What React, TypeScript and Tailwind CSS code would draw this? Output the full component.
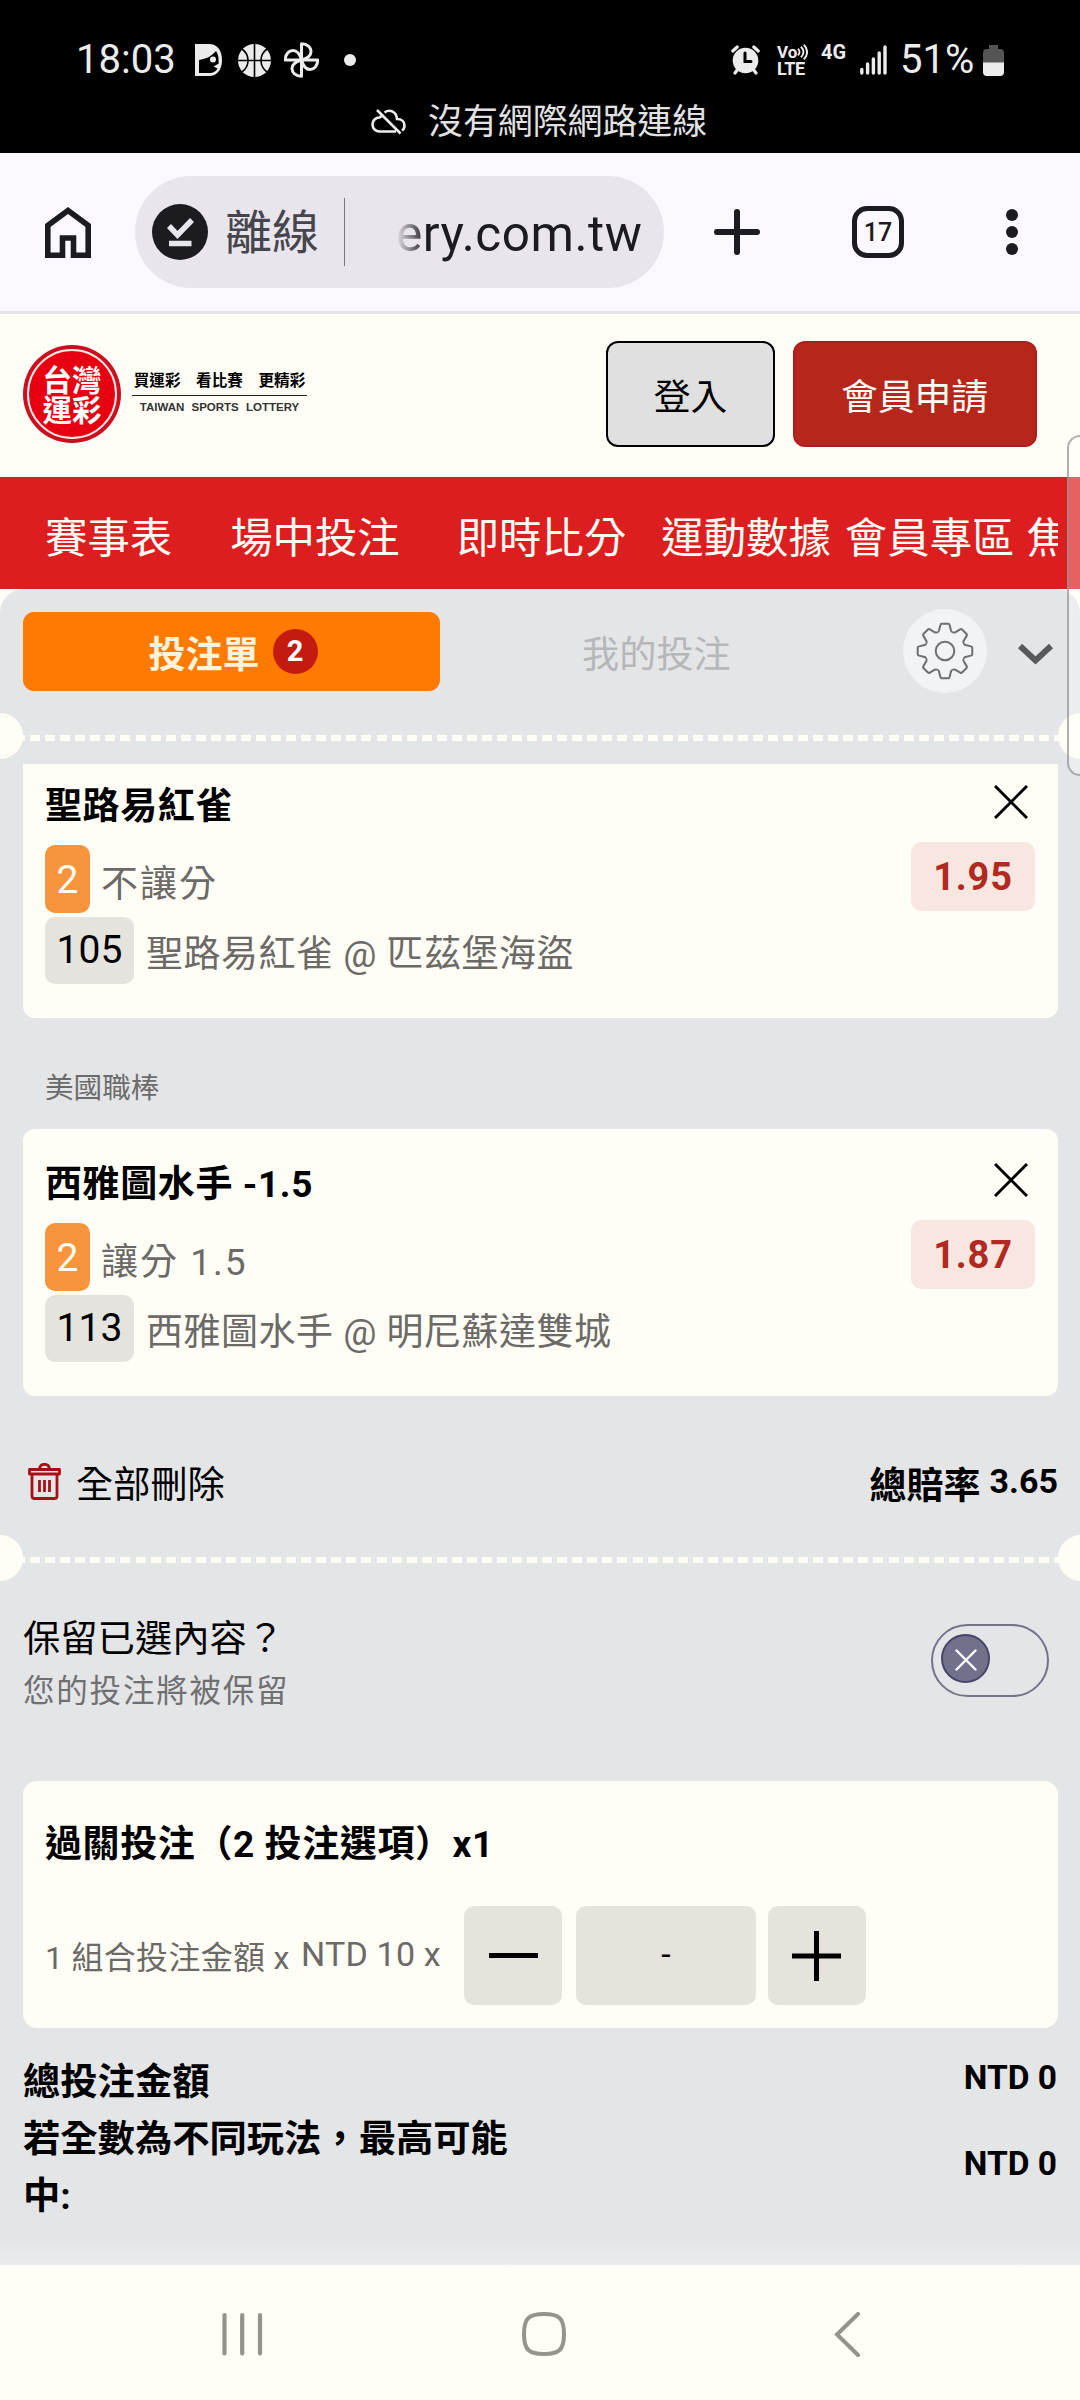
import { Fragment } from "react";

interface Bet {
  title: string;
  kind: string;
  code: string;
  match: string;
  odds: string;
}

const bets: Bet[] = [
  {
    title: "聖路易紅雀",
    kind: "不讓分",
    code: "105",
    match: "聖路易紅雀 @ 匹茲堡海盜",
    odds: "1.95",
  },
  {
    title: "西雅圖水手 -1.5",
    kind: "讓分 1.5",
    code: "113",
    match: "西雅圖水手 @ 明尼蘇達雙城",
    odds: "1.87",
  },
];

//////////

function StatusBar() {
  return (
    <div className="h-[153px] shrink-0 bg-black text-[#ececec] pt-10">
      <div className="h-10 flex items-center pl-[76px] pr-[76px]">
        <p className="w-[119px] text-[40px] leading-10">18:03</p>
        <svg width="27" height="32" viewBox="0 0 27 32" fill="currentColor">
          <path
            fillRule="evenodd"
            d="M0 0h14c8 0 13 6 13 16s-5 16-13 16H0zM4 16v13h10c5 0 7-2 8.500-4.500l-4-2L22 20.500a2 2 0 0 0 1.500-3V14c-.5-3-1-5-2.500-7C16 13 10 15 4 16z"
          />
          <circle cx="18" cy="15.500" r="3" />
        </svg>
        <svg className="ml-4" width="33" height="33" viewBox="0 0 33 33">
          <circle cx="16.500" cy="16.500" r="16.500" fill="currentColor" />
          <path
            d="M16.500 0v33M0 16.500h33M4 5c8 6 8 17 0 23M29 5c-8 6-8 17 0 23"
            fill="none"
            stroke="#000"
            strokeWidth="1.600"
          />
        </svg>
        <svg
          className="ml-[13px]"
          width="35"
          height="36"
          viewBox="-17.5 -18 35 36"
          fill="none"
          stroke="currentColor"
          strokeWidth="3"
          strokeLinejoin="round"
        >
          {[0, 90, 180, 270].map((angle) => (
            <path
              key={angle}
              d="M0 0V-16.200C6-16.200 9.500-12.500 9.500-8.500C9.500-4 5.500-1.500 0 0"
              transform={`rotate(${angle})`}
            />
          ))}
        </svg>
        <span className="ml-[25px] size-3 rounded-full bg-[#ececec]" />

        <svg
          className="ml-auto"
          width="29"
          height="30"
          viewBox="0 0 29 30"
          fill="none"
          stroke="currentColor"
          strokeLinecap="round"
        >
          <circle cx="14.500" cy="15.500" r="12.800" fill="currentColor" stroke="none" />
          <path d="M1.800 6 6.200 2M27.200 6 22.800 2M4 28l3-4M25 28l-3-4" strokeWidth="3.200" />
          <path d="M14 8v8.500h6" stroke="#000" strokeWidth="3" />
        </svg>
        <div className="ml-[17px] w-[31px] font-bold">
          <div className="flex items-center h-4 text-[17px] leading-4">
            Vo
            <svg
              width="11"
              height="16"
              viewBox="0 0 11 16"
              fill="none"
              stroke="currentColor"
              strokeWidth="2"
            >
              <path d="M1 4.500c2 2 2 5 0 7M4 2.500c3.500 3 3.500 8 0 11M7 .5c4.500 4 4.500 11 0 15" />
            </svg>
          </div>
          <p className="text-[18px] leading-[17px] tracking-[-0.5px]">LTE</p>
        </div>
        <p className="ml-[13px] w-[26px] text-[20px] leading-5 font-bold -mt-[17px]">4G</p>
        <svg
          className="ml-[13px]"
          width="27"
          height="30"
          viewBox="0 0 27 30"
          stroke="currentColor"
          strokeWidth="3.400"
          strokeLinecap="round"
        >
          <path d="M1.800 24.500v3.500M7.600 19v9M13.400 14v14M19.200 8v20M25 2v26" />
        </svg>
        <p className="ml-[13px] w-[83px] text-[40px] leading-10">51%</p>
        <svg width="21" height="31" viewBox="0 0 21 31">
          <path d="M6 0h9v4h2q4 0 4 4v10H0V8q0-4 4-4h2z" fill="#555" />
          <path d="M0 17.500h21V27q0 4-4 4H4q-4 0-4-4z" fill="currentColor" />
        </svg>
      </div>
      <div className="h-10 mt-[22px] flex items-center pl-[371px]">
        <svg
          width="35"
          height="26"
          viewBox="0 0 35 26"
          fill="none"
          stroke="currentColor"
          strokeWidth="2.600"
        >
          <path d="M6 1 29.500 24.500M25 22.500H8.500C4.500 22.500 1.500 19.500 1.500 15.500S4.500 8.500 8.500 8.500L11 6.500M13.500 3.500C19-.5 25.500 3 26 10C31 10 33.500 13 33.500 16.500C33.500 18.500 32.500 20.500 31 21.500" />
        </svg>
        <p className="ml-[22px] mt-0.5 text-[34.9px] leading-10 text-[#e2e2e2]">沒有網際網路連線</p>
      </div>
    </div>
  );
}

//////////

function BrowserBar() {
  return (
    <div className="h-[161px] shrink-0 flex items-center bg-[#fbf9ff] border-b-[3px] border-[#e3e2e8] pl-[45px] text-[#1c1b20]">
      <svg
        width="46"
        height="51"
        viewBox="0 0 46 51"
        fill="none"
        stroke="currentColor"
        strokeWidth="5.600"
      >
        <path d="M2.800 48.200V18.500L23 3.500l20.200 15v29.700H28.500V31h-11v17.200z" />
      </svg>
      <div className="ml-11 w-[529px] h-28 rounded-full bg-[#e8e6ec] flex items-center pl-[17px]">
        <svg width="56" height="56" viewBox="0 0 56 56">
          <circle cx="28" cy="28" r="28" fill="currentColor" />
          <path
            d="M17 22l8.500 9L40 16M17 39.500h22.500"
            fill="none"
            stroke="#e8e6ec"
            strokeWidth="5.500"
          />
        </svg>
        <p className="ml-[17px] mt-0.5 text-[47px] leading-[56px] text-[#46454c]">離線</p>
        <span className="ml-[25px] w-px h-[68px] bg-[#77767c]" />
        <p className="ml-[51px] mt-[3px] text-[49.500px] leading-[56px] tracking-[0.5px] [mask-image:linear-gradient(to_right,transparent,black_30px)]">
          ery.com.tw
        </p>
      </div>
      <svg
        className="ml-[50px]"
        width="46"
        height="46"
        viewBox="0 0 46 46"
        stroke="currentColor"
        strokeWidth="6"
        strokeLinecap="round"
      >
        <path d="M23 3v40M3 23h40" />
      </svg>
      <div className="ml-[92px] w-[52px] h-[52px] border-[5.500px] border-[#1c1b20] rounded-[15px] flex items-center justify-center text-[25px] leading-none font-medium">
        17
      </div>
      <div className="ml-[102px] flex flex-col gap-[5px]">
        <span className="size-3 rounded-full bg-[#1c1b20]" />
        <span className="size-3 rounded-full bg-[#1c1b20]" />
        <span className="size-3 rounded-full bg-[#1c1b20]" />
      </div>
    </div>
  );
}

//////////

function Header() {
  return (
    <div className="h-[163px] shrink-0 flex items-center pl-[23px] pb-[3px]">
      <div className="size-[98px] rounded-full bg-[#c90f20] p-1">
        <div className="size-full rounded-full border-2 border-[#ffe9e4] bg-[#e60012] text-white font-bold text-[29.500px] leading-[30px] flex flex-col items-center justify-center pt-[3px]">
          <p>台灣</p>
          <p>運彩</p>
        </div>
      </div>
      <div className="ml-[11px] w-[175px] flex flex-col items-center -mt-[3px]">
        <p className="text-[15.600px] leading-6 font-bold text-black whitespace-pre">
          買運彩　看比賽　更精彩
        </p>
        <span className="mt-0.5 w-full h-px bg-[#222]" />
        <p className="mt-0.5 font-['Liberation_Sans'] text-[11.5px] leading-[18px] font-bold text-[#333] [word-spacing:4px] whitespace-nowrap">
          TAIWAN SPORTS LOTTERY
        </p>
      </div>
      <button className="ml-auto w-[169px] h-[106px] border-2 border-black rounded-xl bg-[#e0e0e0] text-[36.8px] leading-10 pt-[7px]">
        登入
      </button>
      <button className="ml-[18px] mr-[43px] w-[244px] h-[106px] border-2 border-[#ad1f1e] rounded-xl bg-[#b7261a] text-[#fffef6] text-[36.8px] leading-10 pt-[7px] pr-px">
        會員申請
      </button>
    </div>
  );
}

function NavBar() {
  return (
    <div className="h-28 shrink-0 bg-[#dd1e20]">
      <div className="h-full w-[1058px] overflow-hidden flex items-center whitespace-nowrap text-[#fffef6] text-[42.4px] leading-[60px] pl-[45px] pt-[11px]">
        <p>賽事表</p>
        <p className="ml-[58px]">場中投注</p>
        <p className="ml-[57px]">即時比分</p>
        <p className="ml-[35px]">運動數據</p>
        <p className="ml-[14px]">會員專區</p>
        <p className="ml-[12px]">焦</p>
      </div>
    </div>
  );
}

//////////

function Gear() {
  return (
    <svg width="58" height="58" viewBox="-29 -29 58 58" fill="none" stroke="#6c6f72" strokeWidth="2">
      <circle r="9.300" />
      {/* one tooth with half a valley on each side, turned eight times */}
      {[0, 45, 90, 135, 180, 225, 270, 315].map((angle) => (
        <path
          key={angle}
          d="M-7.900-19.100Q-6.700-18.600-6-20.500L-4.600-26Q-4.300-27.300-3.200-27.300H3.200Q4.300-27.300 4.600-26L6-20.500Q6.700-18.600 7.900-19.100"
          transform={`rotate(${angle})`}
        />
      ))}
    </svg>
  );
}

function Tabs() {
  return (
    <div className="h-[124px] flex items-center pl-[23px]">
      <div className="w-[417px] h-[79px] rounded-[11px] bg-[#ff7a00] flex items-center justify-center gap-[13px] pl-[3px]">
        <p className="text-[37px] leading-10 font-bold text-[#fff3dc] mt-[9px]">投注單</p>
        <span className="size-[45px] rounded-full bg-[#c41a10] text-white text-[29px] leading-[45px] font-bold text-center">
          2
        </span>
      </div>
      <p className="ml-[142px] text-[37.200px] leading-10 text-[#b5b7b9] mt-[8px]">我的投注</p>
      <span className="ml-[172px] size-[84px] rounded-full bg-[#f1f3f6] flex items-center justify-center">
        <Gear />
      </span>
      <svg className="ml-[31px] mt-1.5" width="35" height="22" viewBox="0 0 35 22">
        <path d="M2 3 17.500 17.500 33 3" fill="none" stroke="#58595b" strokeWidth="6" />
      </svg>
    </div>
  );
}

function Perforation() {
  return (
    <div className="relative h-[46px] flex items-center">
      <span className="absolute -left-[23px] size-[46px] rounded-full bg-[#fffef6]" />
      <span className="w-full h-[5.500px] mt-1 bg-[repeating-linear-gradient(to_right,#fffef6_0px,#fffef6_10px,transparent_10px,transparent_15.060px)]" />
      <span className="absolute left-[1058px] size-[46px] rounded-full bg-[#fffef6]" />
    </div>
  );
}

//////////

interface BetCardProps {
  bet: Bet;
}

function BetCard({ bet }: BetCardProps) {
  return (
    <div className="h-[267px] shrink-0 rounded-xl bg-[#fffef6] pl-[22px] pr-[23px] pt-[33px]">
      <div className="h-[45px] flex items-center justify-between">
        <p className="text-[37px] leading-[45px] tracking-[0.6px] font-bold text-black">{bet.title}</p>
        <svg className="mr-[7px] -mt-[9px]" width="34" height="34" viewBox="0 0 34 34" stroke="#000" strokeWidth="3">
          <path d="M1 1 33 33M33 1 1 33" />
        </svg>
      </div>
      <div className="mt-[16px] flex justify-between">
        <div>
          <div className="flex items-center gap-[11px]">
            <span className="w-[45px] h-[68px] rounded-[10px] bg-[#f8943c] text-[#fffef6] text-[39px] leading-[70px] text-center">
              2
            </span>
            <p className="mt-[11px] text-[37px] leading-10 tracking-[2px] text-[#6b6a66]">{bet.kind}</p>
          </div>
          <div className="mt-1 flex items-center gap-[12px]">
            <span className="w-[89px] h-[67px] rounded-[10px] bg-[#e5e3de] text-black text-[39px] leading-[67px] text-center">
              {bet.code}
            </span>
            <p className="mt-[9px] text-[37px] leading-10 tracking-[0.5px] text-[#6b6a66]">{bet.match}</p>
          </div>
        </div>
        <span className="-mt-[3px] w-[124px] h-[69px] rounded-[10px] bg-[#f7e7e0] text-[#b02a22] text-[38px] leading-[70px] tracking-[0.8px] font-bold text-center">
          {bet.odds}
        </span>
      </div>
    </div>
  );
}

function BetList() {
  return (
    <div className="px-[23px] pr-[22px]">
      {/* the first card is scrolled slightly under the tabs */}
      <div className="mt-[5px] h-[254px] overflow-hidden flex flex-col justify-end">
        <BetCard bet={bets[0]} />
      </div>
      {bets.slice(1).map((bet) => (
        <Fragment key={bet.code}>
          <p className="h-[111px] pl-[22px] pt-[50px] text-[28.600px] leading-10 text-[#6b6b6b]">
            美國職棒
          </p>
          <BetCard bet={bet} />
        </Fragment>
      ))}
    </div>
  );
}

function ListFooter() {
  return (
    <div className="h-[139px] flex pl-[28px] pr-[22px] pt-[67px] text-black">
      <svg
        width="33"
        height="37"
        viewBox="0 0 33 37"
        fill="none"
        stroke="#a80f17"
        strokeWidth="2.800"
        strokeLinejoin="round"
      >
        <path d="M1.500 6.500h30v4.500h-30zM4 11h25v22q0 2.500-2.500 2.500h-20Q4 35.500 4 33zM11.500 6.500Q11.500 1.300 16.500 1.300T21.500 6.500M11.500 17v12M16.500 17v12M21.500 17v12" />
      </svg>
      <p className="ml-[15px] mt-[2px] text-[37.200px] leading-10">全部刪除</p>
      <p className="ml-auto mt-[4px] text-[37px] leading-10 font-bold">總賠率</p>
      <p className="ml-[9px] -mt-[2px] text-[34px] leading-10 font-bold">3.65</p>
    </div>
  );
}

//////////

function KeepSelection() {
  return (
    <div className="h-[200px] flex justify-between pl-[23px] pr-[31px]">
      <div className="pt-[35px]">
        <p className="text-[37.300px] leading-[46px] text-black">保留已選內容？</p>
        <p className="mt-[8px] text-[31.500px] leading-[44px] tracking-[1.8px] text-[#6f7072]">
          您的投注將被保留
        </p>
      </div>
      <div className="mt-[43px] w-[118px] h-[73px] rounded-full border-2 border-[#73738a] pl-[8px] pt-[8px]">
        <div className="size-[49px] rounded-full border-2 border-[#45456b] bg-[#72718c] flex items-center justify-center">
          <svg
            className="mt-[3px] ml-px"
            width="22"
            height="22"
            viewBox="0 0 22 22"
            stroke="#fff"
            strokeWidth="2.400"
            strokeLinecap="round"
          >
            <path d="M1.500 1.500 20.500 20.500M20.500 1.500 1.500 20.500" />
          </svg>
        </div>
      </div>
    </div>
  );
}

function Stake() {
  return (
    <div className="ml-[23px] w-[1035px] h-[247px] rounded-[14px] bg-[#fffef6] pl-[22px] pt-[40px]">
      <p className="text-[37px] leading-[48px] tracking-[0.6px] font-bold text-black">
        過關投注（2 投注選項）x1
      </p>
      <div className="mt-[37px] flex items-center text-[#6b6a66]">
        <p className="mt-[5px] w-[256px] text-[32px] leading-10 tracking-[0.3px] whitespace-nowrap">
          1 組合投注金額 x
        </p>
        <p className="-mt-[3px] w-[163px] text-[34px] leading-10 tracking-[0.2px] whitespace-nowrap">NTD 10 x</p>
        <button className="w-[98px] h-[99px] rounded-[10px] bg-[#e5e3dc] flex items-center justify-center">
          <span className="w-[49px] h-[5px] bg-black" />
        </button>
        <div className="ml-[14px] w-[180px] h-[99px] rounded-[10px] bg-[#e5e3dc] text-black text-[34px] leading-[97px] text-center">
          -
        </div>
        <button className="ml-[12px] w-[98px] h-[99px] rounded-[10px] bg-[#e5e3dc] flex items-center justify-center">
          <svg className="mr-0.5" width="49" height="50" viewBox="0 0 49 50" stroke="#000" strokeWidth="5">
            <path d="M24.500 0v50M0 25h49" />
          </svg>
        </button>
      </div>
    </div>
  );
}

function Totals() {
  return (
    <div className="flex-1 pt-[26px] pl-[23px] pr-[23px] text-black font-bold bg-[linear-gradient(to_top,#ebecee,#e4e5e7_25px)]">
      <div className="flex justify-between text-[37.300px] leading-[57px]">
        <p>總投注金額</p>
        <p className="text-[33.500px] leading-[48px]">NTD 0</p>
      </div>
      <div className="flex justify-between items-center text-[37.300px] leading-[57px]">
        <p className="w-[500px]">若全數為不同玩法，最高可能中:</p>
        <p className="text-[33.500px] leading-[48px] -mt-[8px]">NTD 0</p>
      </div>
    </div>
  );
}

//////////

function SystemNav() {
  return (
    <div className="h-[135px] shrink-0 bg-[#fffdf6] pt-[47px] flex items-start pl-[222px]">
      <svg width="41" height="44" viewBox="0 0 41 44" stroke="#94938c" strokeWidth="4.200" strokeLinecap="round">
        <path d="M2.500 3v38.500M20.200 3v38.500M38 3v38.500" />
      </svg>
      <svg className="ml-[259px]" width="44" height="44" viewBox="0 0 44 44">
        <path
          d="M22 2C37 2 42 6 42 22S37 42 22 42S2 38 2 22S7 2 22 2z"
          fill="none"
          stroke="#94938c"
          strokeWidth="4"
        />
      </svg>
      <svg
        className="ml-[268px]"
        width="27"
        height="46"
        viewBox="0 0 27 46"
        fill="none"
        stroke="#94938c"
        strokeWidth="4"
        strokeLinecap="round"
      >
        <path d="M24 2 3 22.500 24 43" />
      </svg>
    </div>
  );
}

//////////

function App() {
  return (
    <div
      lang="zh-TW"
      className="relative w-[1080px] h-[2400px] overflow-hidden flex flex-col bg-[#fffef6] font-['Roboto','Noto_Sans_CJK_TC',sans-serif]"
    >
      <StatusBar />
      <BrowserBar />
      <Header />
      <NavBar />
      <div className="flex-1 flex flex-col rounded-t-[24px] bg-[#e4e5e7]">
        <Tabs />
        <Perforation />
        <BetList />
        <ListFooter />
        <Perforation />
        <KeepSelection />
        <Stake />
        <Totals />
      </div>
      <SystemNav />
      <span className="absolute left-[1067px] top-[435px] w-[20px] h-[341px] rounded-l-[13px] border-2 border-[#8f8f8f]/70 bg-white/30" />
    </div>
  );
}
export default App;
